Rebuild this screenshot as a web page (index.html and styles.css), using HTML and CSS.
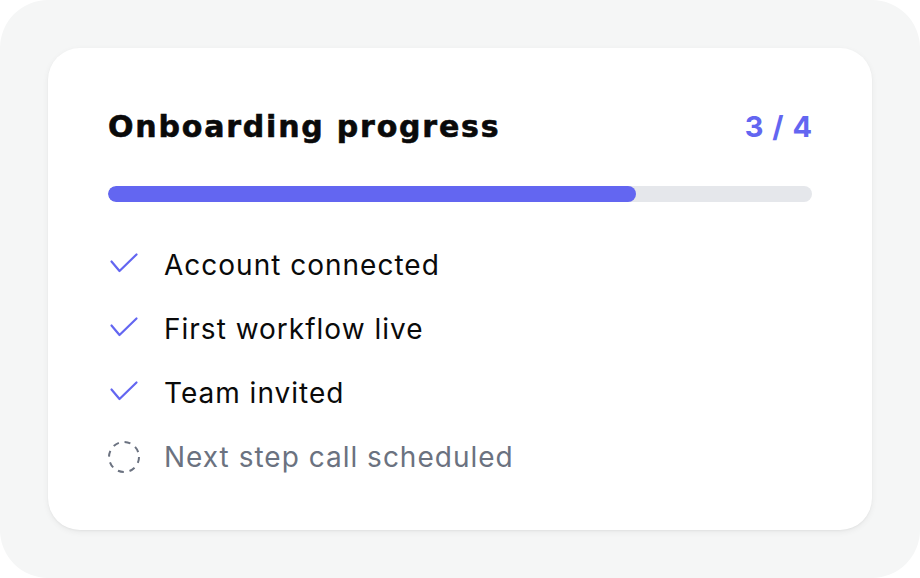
FILE: index.html
```html
<!DOCTYPE html>
<html>
<head>
<meta charset="utf-8">
<link rel="stylesheet" href="styles.css">
</head>
<body>
<div class="panel">
  <div class="card">
    <div class="head">
      <h1 class="title">Onboarding progress</h1>
      <span class="count">3 / 4</span>
    </div>
    <div class="track"><div class="fill" style="width:75%"></div></div>
    <ul class="steps">
      <li class="step done">
        <svg class="icon" viewBox="0 0 32 32"><path d="M3.5 12.5 L11.5 22 L28.5 5.5" fill="none" stroke="#6366f1" stroke-width="2.2" stroke-linecap="round" stroke-linejoin="round"/></svg>
        <span>Account connected</span>
      </li>
      <li class="step done">
        <svg class="icon" viewBox="0 0 32 32"><path d="M3.5 12.5 L11.5 22 L28.5 5.5" fill="none" stroke="#6366f1" stroke-width="2.2" stroke-linecap="round" stroke-linejoin="round"/></svg>
        <span>First workflow live</span>
      </li>
      <li class="step done">
        <svg class="icon" viewBox="0 0 32 32"><path d="M3.5 12.5 L11.5 22 L28.5 5.5" fill="none" stroke="#6366f1" stroke-width="2.2" stroke-linecap="round" stroke-linejoin="round"/></svg>
        <span>Team invited</span>
      </li>
      <li class="step todo">
        <svg class="icon" viewBox="0 0 32 32"><circle cx="16" cy="16" r="15" fill="none" stroke="#6b7280" stroke-width="2" stroke-dasharray="6 5.8"/></svg>
        <span>Next step call scheduled</span>
      </li>
    </ul>
  </div>
</div>
</body>
</html>
```
FILE: styles.css
```css
* { box-sizing: border-box; }
html, body { margin: 0; padding: 0; background: #ffffff; }
body { width: 920px; height: 578px; font-family: Inter, "Noto Sans", sans-serif; }
.panel {
  width: 920px; height: 578px;
  background: #f5f6f6;
  border-radius: 48px;
  padding: 48px;
}
.card {
  width: 824px; height: 482px;
  background: #ffffff;
  border-radius: 32px;
  box-shadow: 0 2px 6px rgba(0,0,0,0.06), 0 1px 2px rgba(0,0,0,0.04);
  padding: 52px 60px 0 60px;
}
.head { display: flex; justify-content: space-between; align-items: center; height: 52px; }
.title { margin: 0; font-family: "DejaVu Sans", sans-serif; font-size: 30px; font-weight: 700; color: #0a0a0a; letter-spacing: 1.8px; -webkit-text-stroke: 0.6px #0a0a0a; }
.count { font-size: 29px; font-weight: 700; color: #6366f1; letter-spacing: 1px; margin-right: -1px; }
.track { margin-top: 34px; height: 16px; background: #e5e7eb; border-radius: 8px; overflow: hidden; }
.fill { height: 100%; background: #6366f1; border-radius: 8px; }
.steps { list-style: none; margin: 43px 0 0 0; padding: 0; display: flex; flex-direction: column; gap: 24px; }
.step { display: flex; align-items: center; gap: 24px; height: 40px; font-size: 28px; letter-spacing: 1px; color: #0a0a0a; }
.step .icon { width: 32px; height: 32px; flex: none; }
.step.todo { color: #6b7280; }
```
